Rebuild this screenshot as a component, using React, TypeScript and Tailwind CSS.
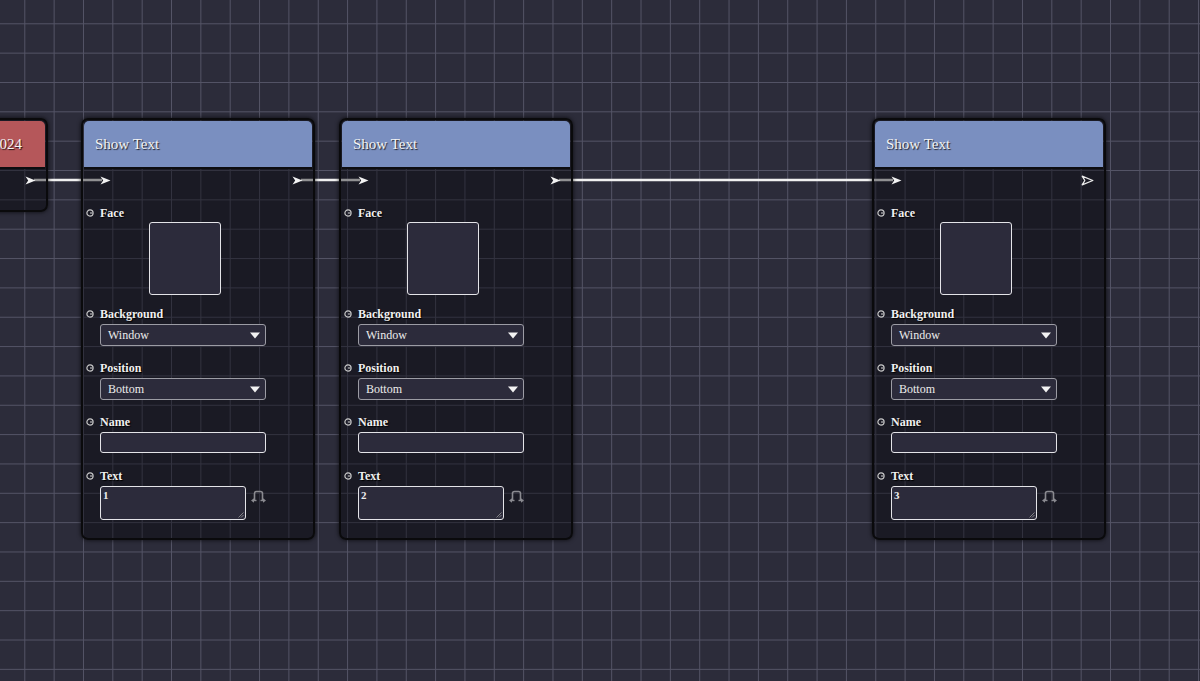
import React from 'react';

const serif = "font-['Liberation_Serif','Times_New_Roman',serif]";

function Arrow({ outline }: { outline?: boolean }) {
  if (outline) {
    return (
      <svg width="13" height="11" viewBox="0 0 13 11" className="block">
        <path d="M1.2 1.2 L11.8 5.5 L1.2 9.8 L3.8 5.5 Z" fill="none" stroke="#ececec" strokeWidth="1.3" strokeLinejoin="round" />
      </svg>
    );
  }
  return (
    <svg width="11" height="9" viewBox="0 0 11 9" className="block">
      <path d="M0.5 0.5 L10.5 4.5 L0.5 8.5 L3.2 4.5 Z" fill="#f2f2f2" />
    </svg>
  );
}

function Dot() {
  return (
    <svg width="8" height="8" viewBox="0 0 8 8" className="block shrink-0">
      <circle cx="4" cy="4" r="3.1" fill="none" stroke="#c8c8c8" strokeWidth="1.2" />
      <path d="M4 4 H6.6" stroke="#c8c8c8" strokeWidth="1.1" />
    </svg>
  );
}

function SwapIcon() {
  return (
    <svg width="15" height="14" viewBox="0 0 15 14" className="block mt-[4px] shrink-0">
      <path d="M3.5 10 V3.5 Q3.5 1.5 5.5 1.5 H9.5 Q11.5 1.5 11.5 3.5 V10" fill="none" stroke="#8a8a90" strokeWidth="1.6" />
      <path d="M2.2 10.5 H5.5" stroke="#8a8a90" strokeWidth="1.4" />
      <path d="M9.5 10.5 H12.8" stroke="#8a8a90" strokeWidth="1.4" />
      <path d="M0 10.5 L3 8.3 L3 12.7 Z" fill="#8a8a90" />
      <path d="M15 10.5 L12 8.3 L12 12.7 Z" fill="#8a8a90" />
    </svg>
  );
}

function Label({ text, className }: { text: string; className: string }) {
  return (
    <div className={`flex items-center h-[14px] pl-[3px] gap-[6px] ${className}`}>
      <Dot />
      <span className={`${serif} text-[12px] font-bold leading-none text-[#f0f0f0] [text-shadow:1px_1px_1px_#000]`}>{text}</span>
    </div>
  );
}

function Select({ value }: { value: string }) {
  return (
    <div className="ml-[17px] mt-[3px] w-[166px] h-[22px] flex items-center justify-between pl-[7px] pr-[5px] rounded-[3px] border border-[#9c9ca4] bg-[#2c2b3b]">
      <span className={`${serif} text-[12px] text-[#ececec]`}>{value}</span>
      <svg width="10" height="7" viewBox="0 0 10 7" className="block">
        <path d="M0 0.5 H10 L5 6.5 Z" fill="#f2f2f2" />
      </svg>
    </div>
  );
}

function ShowText({ pos, text, last }: { pos: string; text: string; last?: boolean }) {
  return (
    <div className={`absolute top-[118px] w-[234px] rounded-[7px] border-2 border-[#0a0a0c] bg-[rgba(0,0,4,0.4)] shadow-[0_0_4px_rgba(0,0,0,0.75)] ${pos}`}>
      <div className="mx-px mt-px h-[48px] rounded-t-[5px] border-b-2 border-[#0d0d10] bg-[#7a8fc0] flex items-center pl-[11px]">
        <span className={`${serif} text-[15px] text-[#f4f4f4] [text-shadow:1px_1px_1px_rgba(0,0,0,0.8)]`}>Show Text</span>
      </div>
      <div className="flex flex-col pb-[18px]">
        <div className="h-[22px] flex items-center justify-between pl-[17px] pr-[10px]">
          <Arrow />
          <Arrow outline={last} />
        </div>
        <Label text="Face" className="mt-[15px]" />
        <div className="ml-[66px] mt-[2px] w-[72px] h-[73px] rounded-[3px] border-[1.5px] border-[#e4e4e8] bg-[#2c2b3b]" />
        <Label text="Background" className="mt-[12px]" />
        <Select value="Window" />
        <Label text="Position" className="mt-[15px]" />
        <Select value="Bottom" />
        <Label text="Name" className="mt-[15px]" />
        <div className="ml-[17px] mt-[3px] w-[166px] h-[21px] rounded-[3px] border-[1.5px] border-[#e4e4e8] bg-[#2c2b3b]" />
        <Label text="Text" className="mt-[16px]" />
        <div className="ml-[17px] mt-[3px] flex items-start gap-[5px]">
          <div className={`relative w-[146px] h-[34px] rounded-[3px] border-[1.5px] border-[#e4e4e8] bg-[#2c2b3b] px-[2px] pt-[3px] ${serif} text-[11px] font-bold leading-none text-[#eeeeee]`}>
            {text}
            <svg width="6" height="6" viewBox="0 0 6 6" className="absolute right-[1px] bottom-[1px]">
              <path d="M5.5 0.5 L0.5 5.5 M5.5 3 L3 5.5" stroke="#8c8c90" strokeWidth="0.9" />
            </svg>
          </div>
          <SwapIcon />
        </div>
      </div>
    </div>
  );
}

export default function App() {
  return (
    <div className="relative w-[1200px] h-[681px] overflow-hidden bg-[#2c2c3a] [background-image:linear-gradient(to_right,#545466_1px,transparent_1px),linear-gradient(to_bottom,#545466_1px,transparent_1px)] [background-size:29.35px_29.35px] [background-position:24.3px_23.3px]">
      {/* links sit under the nodes so the node bodies dim them */}
      <svg width="1200" height="681" className="absolute inset-0">
        <g stroke="#f1f1f1" strokeWidth="2.5">
          <line x1="34" y1="180" x2="102" y2="180" />
          <line x1="301" y1="180" x2="360" y2="180" />
          <line x1="559" y1="180" x2="893" y2="180" />
        </g>
      </svg>

      <div className="absolute top-[118px] left-[-22px] w-[70px] rounded-[7px] border-2 border-[#0a0a0c] bg-[rgba(0,0,4,0.4)] shadow-[0_0_4px_rgba(0,0,0,0.75)]">
        <div className="mx-px mt-px h-[48px] rounded-t-[5px] border-b-2 border-[#0d0d10] bg-[#b5575a] flex items-center pl-[11px]">
          <span className={`${serif} text-[15px] text-[#f4f4f4] [text-shadow:1px_1px_1px_rgba(0,0,0,0.8)]`}>2024</span>
        </div>
        <div className="h-[22px] mb-[19px] flex items-center justify-end pr-[10px]">
          <Arrow />
        </div>
      </div>

      <ShowText pos="left-[81px]" text="1" />
      <ShowText pos="left-[339px]" text="2" />
      <ShowText pos="left-[872px]" text="3" last />
    </div>
  );
}
